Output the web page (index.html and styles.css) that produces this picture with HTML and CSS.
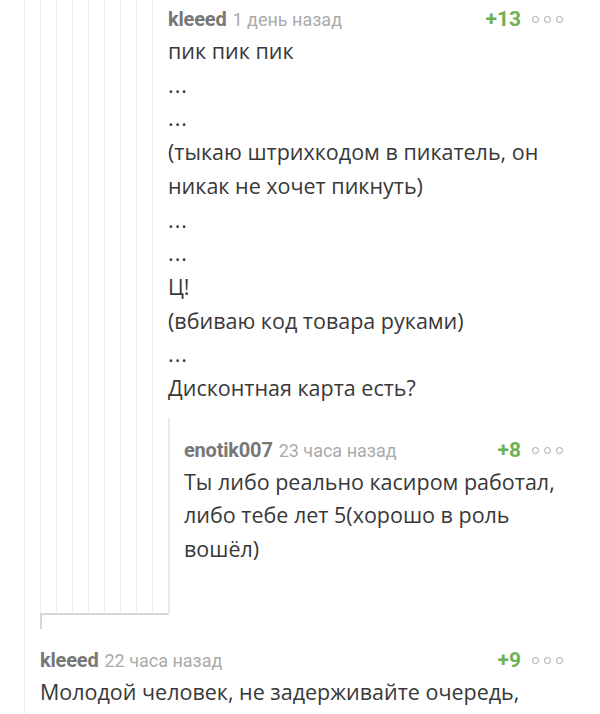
FILE: index.html
```html
<!DOCTYPE html>
<html lang="ru">
<head>
<meta charset="utf-8">
<link rel="stylesheet" href="styles.css">
</head>
<body>
<div class="thread">
  <div class="branch top">
    <div class="lvl"><div class="lvl"><div class="lvl"><div class="lvl"><div class="lvl"><div class="lvl"><div class="lvl"><div class="lvl inner">
      <div class="comment first">
        <div class="head">
          <span class="user">kleeed</span>
          <span class="time">1 день назад</span>
          <span class="score">+13</span>
          <span class="more"><i></i><i></i><i></i></span>
        </div>
        <div class="body">
          <p>пик пик пик</p>
          <p class="dots">...</p>
          <p class="dots">...</p>
          <p>(тыкаю штрихкодом в пикатель, он никак не хочет пикнуть)</p>
          <p class="dots">...</p>
          <p class="dots">...</p>
          <p>Ц!</p>
          <p>(вбиваю код товара руками)</p>
          <p class="dots">...</p>
          <p>Дисконтная карта есть?</p>
        </div>
      </div>
      <div class="reply">
        <div class="comment">
          <div class="head">
            <span class="user">enotik007</span>
            <span class="time">23 часа назад</span>
            <span class="score">+8</span>
            <span class="more"><i></i><i></i><i></i></span>
          </div>
          <div class="body">
            <p>Ты либо реально касиром работал, либо тебе лет 5(хорошо в роль вошёл)</p>
          </div>
        </div>
      </div>
    </div></div></div></div></div></div></div></div>
    <div class="collapse"></div>
    <div class="comment last">
      <div class="head">
        <span class="user">kleeed</span>
        <span class="time">22 часа назад</span>
        <span class="score">+9</span>
        <span class="more"><i></i><i></i><i></i></span>
      </div>
      <div class="body">
        <p>Молодой человек, не задерживайте очередь,</p>
      </div>
    </div>
  </div>
</div>
</body>
</html>
```
FILE: styles.css
```css
html, body {
  margin: 0;
  padding: 0;
  background: #fff;
}
body {
  width: 600px;
  height: 714px;
  overflow: hidden;
  font-family: "Open Sans", "Noto Sans", sans-serif;
  color: #333;
}
.thread {
  padding-left: 24px;
}
.branch.top {
  border-left: 1px solid #eeeeee;
  padding-left: 15px;
  min-height: 714px;
}
.lvl {
  border-left: 1px solid #eeeeee;
  padding-left: 15px;
}
.comment {
  padding-right: 37px;
}
.comment.first {
  padding-top: 5px;
  padding-bottom: 13px;
}
.head {
  display: flex;
  align-items: baseline;
  height: 29px;
  line-height: 29px;
}
.user {
  font-family: Roboto, "Open Sans", sans-serif;
  font-weight: 700;
  font-size: 20px;
  color: #777;
  letter-spacing: -0.2px;
}
.time {
  font-family: Roboto, "Open Sans", sans-serif;
  font-size: 18px;
  color: #aaa;
  margin-left: 6px;
}
.score {
  margin-left: auto;
  font-family: Roboto, "Open Sans", sans-serif;
  font-weight: 700;
  font-size: 21px;
  color: #6db155;
  margin-right: -3px;
}
.more {
  display: flex;
  gap: 5px;
  margin-left: 14px;
  align-self: center;
}
.more i {
  display: block;
  width: 5px;
  height: 5px;
  border: 1.5px solid #a6a6a6;
  border-radius: 50%;
}
.body p {
  margin: 0;
  font-size: 21.5px;
  line-height: 33.7px;
  color: #383838;
}
.body p.dots {
  letter-spacing: 1px;
}
.reply {
  border-left: 2px solid #e9e9e9;
  padding-left: 14px;
  padding-top: 18px;
  padding-bottom: 47px;
}
.collapse {
  width: 127px;
  height: 14px;
  border-top: 2px solid #d6d6d6;
  border-left: 2px solid #d6d6d6;
}
.comment.last {
  padding-top: 17px;
}
```
